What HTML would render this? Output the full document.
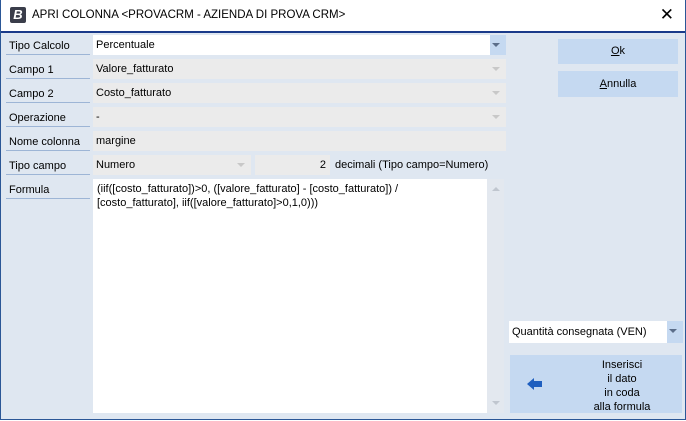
<!DOCTYPE html><html><head><style>
body{margin:0;width:686px;height:421px;overflow:hidden;font-family:"Liberation Sans",Tahoma,sans-serif;font-size:11px;color:#000}
.win{position:absolute;left:0;top:0;width:684px;height:419px;border:1px solid #2b5797;border-top:none;background:#dfe7f1}
.title{position:absolute;left:0;top:0;width:684px;height:31px;background:#fff;border-bottom:2px solid #1a3a8a}
.title .ic{position:absolute;left:9px;top:7px;width:16px;height:16px;background:#3a3d4a;border-radius:2px;color:#fff;font-style:italic;font-weight:bold;font-size:13px;line-height:16px;text-align:center}
.title .t{position:absolute;left:31px;top:9px;font-size:11.5px}
.title .x{position:absolute;right:11px;top:5px;font-size:17px;font-weight:300}
.lab{position:absolute;left:5px;width:84px;border-bottom:1px solid #9db5d6;padding-left:3px;line-height:22px;box-sizing:border-box;height:20px}
.f{position:absolute;left:92px;width:413px;height:20px;background:#ebebeb;line-height:20px;padding-left:3px;box-sizing:border-box}
.dd::after{content:"";position:absolute;right:6px;top:8px;border:4px solid transparent;border-top:4px solid #c8c8c8;border-bottom:none}
.dd.on::after{border-top-color:#5b6e8a}
.btn{position:absolute;background:#c5d9f1;text-align:center}
</style></head><body><div class="win">
<div class="title"><div class="ic">B</div><div class="t">APRI COLONNA &lt;PROVACRM - AZIENDA DI PROVA CRM&gt;</div><div class="x">✕</div></div>
<div class="lab" style="top:35px">Tipo Calcolo</div>
<div class="lab" style="top:59px">Campo 1</div>
<div class="lab" style="top:83px">Campo 2</div>
<div class="lab" style="top:107px">Operazione</div>
<div class="lab" style="top:131px">Nome colonna</div>
<div class="lab" style="top:155px">Tipo campo</div>
<div class="lab" style="top:179px">Formula</div>
<div class="f dd on" style="top:35px;background:#fff">Percentuale<div style="position:absolute;right:0;top:0;width:16px;height:20px;background:#c5d9f1"></div></div>
<div class="f dd" style="top:59px">Valore_fatturato</div>
<div class="f dd" style="top:83px">Costo_fatturato</div>
<div class="f dd" style="top:107px">-</div>
<div class="f" style="top:131px">margine</div>
<div class="f dd" style="top:155px;width:158px">Numero</div>
<div class="f" style="top:155px;left:254px;width:75px;text-align:right;padding-right:4px">2</div>
<div style="position:absolute;left:334px;top:155px;line-height:20px">decimali (Tipo campo=Numero)</div>
<div style="position:absolute;left:92px;top:179px;width:411px;height:234px;background:#fff"><div style="padding:3px 4px;line-height:14px;width:380px">(iif([costo_fatturato])&gt;0, ([valore_fatturato] - [costo_fatturato]) / [costo_fatturato], iif([valore_fatturato]&gt;0,1,0)))</div><div style="position:absolute;right:0;top:0;width:17px;height:234px;background:#e3e8ef"><div style="position:absolute;left:5px;top:8px;border:4px solid transparent;border-bottom:4px solid #c0c6cf;border-top:none"></div><div style="position:absolute;left:5px;bottom:8px;border:4px solid transparent;border-top:4px solid #c0c6cf;border-bottom:none"></div></div></div>
<div class="btn" style="left:557px;top:39px;width:120px;height:25px;line-height:25px"><u>O</u>k</div>
<div class="btn" style="left:557px;top:71px;width:120px;height:26px;line-height:26px"><u>A</u>nnulla</div>
<div class="f dd on" style="left:508px;top:321px;width:174px;height:22px;background:#fff;line-height:22px">Quantità consegnata (VEN)<div style="position:absolute;right:0;top:0;width:16px;height:22px;background:#c5d9f1"></div></div>
<div class="btn" style="left:509px;top:355px;width:172px;height:58px;line-height:14px;box-sizing:border-box"><div style="margin-left:60px;width:104px;padding-top:3px">Inserisci<br>il dato<br>in coda<br>alla formula</div><svg style="position:absolute;left:17px;top:22px" width="16" height="14" viewBox="0 0 16 14"><path d="M0 7 L7 1 L7 4 L15 4 L15 10 L7 10 L7 13 Z" fill="#1f5fbf"/></svg></div>
</div></body></html>
